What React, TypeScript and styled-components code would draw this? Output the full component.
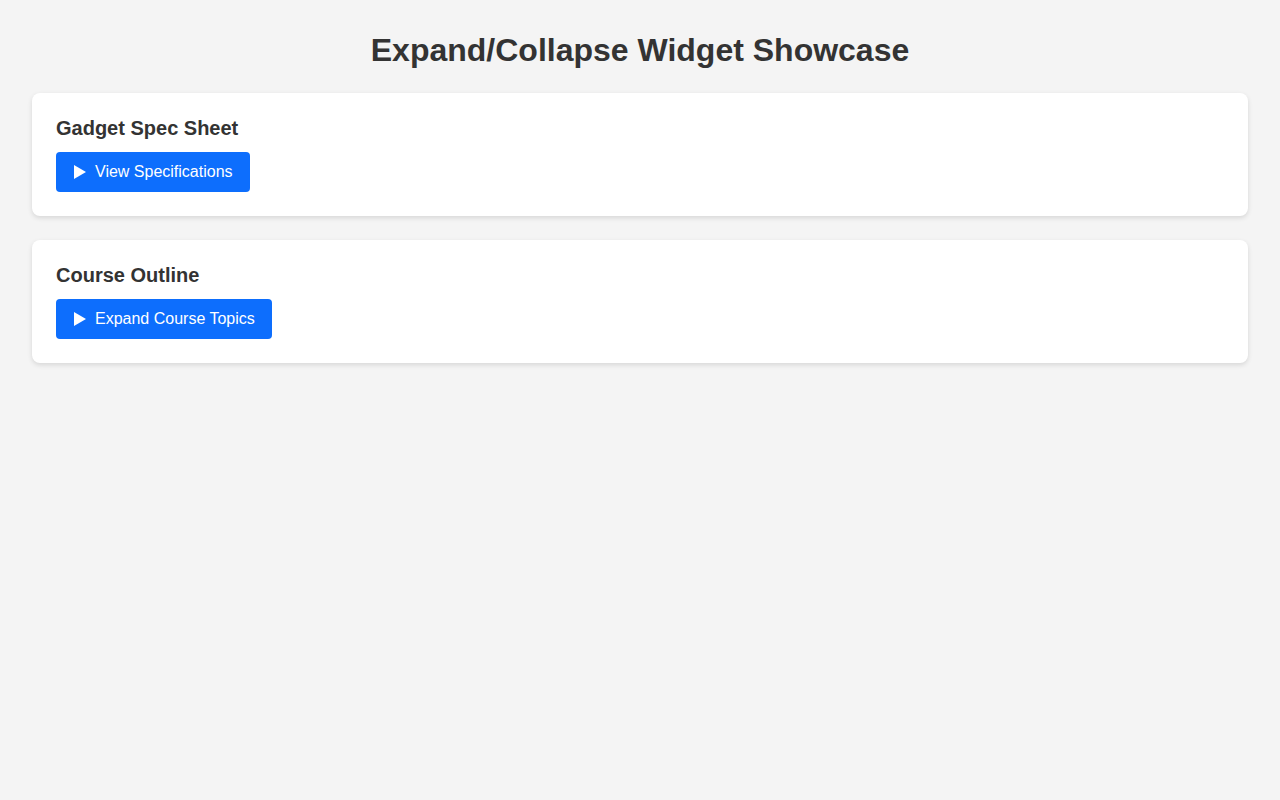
import React from "react";
import styled, { createGlobalStyle } from "styled-components";

const GlobalStyle = createGlobalStyle`
  html, body {
    margin: 0;
    padding: 0;
    background: #f4f4f4;
    font-family: "Liberation Sans", Arial, sans-serif;
    color: #333;
  }
`;

const Page = styled.div`
  padding: 32px;
  display: flex;
  flex-direction: column;
  gap: 24px;
`;

const Title = styled.h1`
  margin: 0;
  font-size: 32px;
  line-height: 37px;
  font-weight: 700;
  text-align: center;
  color: #333;
`;

const Card = styled.section`
  background: #fff;
  border-radius: 8px;
  padding: 24px;
  box-shadow: 0 2px 5px rgba(0, 0, 0, 0.12);
  display: flex;
  flex-direction: column;
  align-items: flex-start;
  gap: 12px;
`;

const CardTitle = styled.h2`
  margin: 0;
  font-size: 20px;
  line-height: 23px;
  font-weight: 700;
  color: #333;
`;

const ToggleButton = styled.button`
  display: inline-flex;
  align-items: center;
  gap: 9px;
  height: 40px;
  padding: 0 17px 0 18px;
  border: none;
  border-radius: 4px;
  background: #0d6efd;
  color: #fff;
  font-family: inherit;
  font-size: 16px;
  cursor: pointer;
`;

const Arrow = () => (
  <svg width="12" height="14" viewBox="0 0 12 14" aria-hidden="true">
    <path d="M0 0 L12 7 L0 14 Z" fill="#fff" />
  </svg>
);

type Widget = { title: string; action: string };

const widgets: Widget[] = [
  { title: "Gadget Spec Sheet", action: "View Specifications" },
  { title: "Course Outline", action: "Expand Course Topics" },
];

export default function App() {
  return (
    <>
      <GlobalStyle />
      <Page>
        <Title>Expand/Collapse Widget Showcase</Title>
        {widgets.map((w) => (
          <Card key={w.title}>
            <CardTitle>{w.title}</CardTitle>
            <ToggleButton type="button">
              <Arrow />
              {w.action}
            </ToggleButton>
          </Card>
        ))}
      </Page>
    </>
  );
}
